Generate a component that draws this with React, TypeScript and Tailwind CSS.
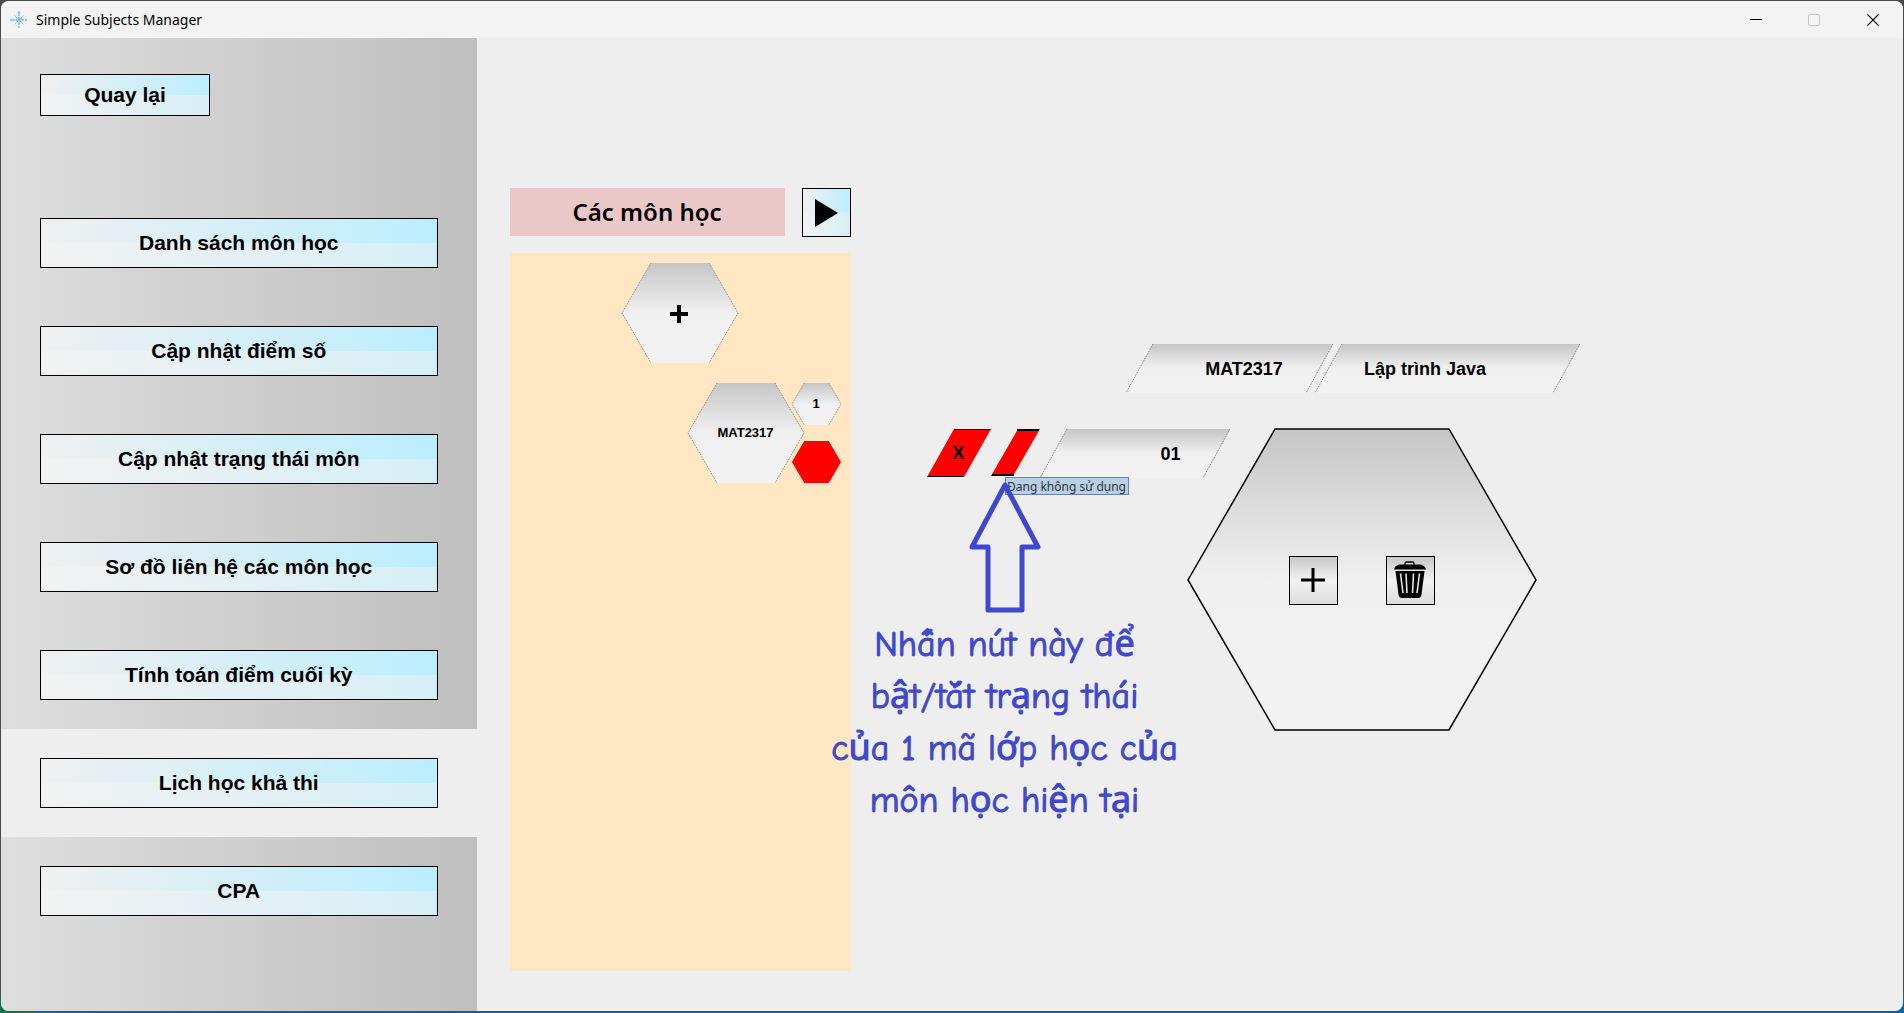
import React from "react";

const navItems = [
  "Danh sách môn học",
  "Cập nhật điểm số",
  "Cập nhật trạng thái môn",
  "Sơ đồ liên hệ các môn học",
  "Tính toán điểm cuối kỳ",
  "Lịch học khả thi",
  "CPA",
];
const activeItem = "Lịch học khả thi";

const glossy =
  "border border-black bg-[linear-gradient(to_right,#f0f0f0,#bbeeff),linear-gradient(to_right,#f2f2f2,#d6eff7)] bg-[length:100%_50%] bg-no-repeat [background-position:top,bottom]";

const silverButton =
  "flex size-[49px] items-center justify-center border border-black bg-linear-to-b from-[#c8c8c8] via-[#f2f2f2] to-[#dcdcdc]";

type ShapeProps = {
  width: number;
  height: number;
  points: string;
  fill?: string;
  stroke?: string;
  strokeWidth?: number;
};

function Shape({ width, height, points, fill, stroke = "#aaaaaa", strokeWidth = 0 }: ShapeProps) {
  const id = React.useId();
  return (
    <svg width={width} height={height} className="col-start-1 row-start-1 overflow-visible" aria-hidden="true">
      <defs>
        <linearGradient id={id} x1="0" y1="0" x2="0" y2="1">
          <stop offset="0" stopColor="#c6c6c6" />
          <stop offset="0.5" stopColor="#f0f0f0" />
          <stop offset="1" stopColor="#f2f2f2" />
        </linearGradient>
      </defs>
      <polygon points={points} fill={fill ?? `url(#${id})`} stroke={stroke} strokeWidth={strokeWidth} />
    </svg>
  );
}

function Hexagon({ width, height, fill }: { width: number; height: number; fill?: string }) {
  const inset = width / 4;
  const points = `${inset},0 ${width - inset},0 ${width},${height / 2} ${width - inset},${height} ${inset},${height} 0,${height / 2}`;
  return (
    <>
      <Shape width={width} height={height} points={points} fill={fill} />
      {!fill && (
        <svg width={width} height={height} className="col-start-1 row-start-1 overflow-visible" aria-hidden="true">
          <path
            d={`M${inset},0L0,${height / 2}L${inset},${height}M${width - inset},0L${width},${height / 2}L${width - inset},${height}`}
            fill="none"
            stroke="#666666"
            strokeOpacity="0.8"
            strokeDasharray="1 1"
          />
        </svg>
      )}
    </>
  );
}

function Slant({ width, height }: { width: number; height: number }) {
  return (
    <>
      <Shape width={width} height={height} points={`27,0 ${width},0 ${width - 27},${height} 0,${height}`} />
      <svg width={width} height={height} className="col-start-1 row-start-1" aria-hidden="true">
        <path
          d={`M27,0L0,${height}M${width},0L${width - 27},${height}`}
          fill="none"
          stroke="#666666"
          strokeOpacity="0.9"
          strokeDasharray="1 1"
        />
      </svg>
    </>
  );
}

function TrashIcon() {
  return (
    <svg width="34" height="38" viewBox="0 0 34 38" aria-hidden="true">
      <path d="M12 4V2.500Q12 1 13.500 1H19.500Q21 1 21 2.500V4" fill="none" stroke="#000" strokeWidth="1.300" />
      <path d="M1 8.500Q1.500 5 6 3.500H28Q32.500 5 33 8.500Z" />
      <path d="M2.500 10H31.500L28.500 33.500Q28 37 25 37H9Q6 37 5.500 33.500Z" />
      <path d="M7.500 12.500L10 32M13 12.500L14 32M20.500 12.500L19.500 32M26.500 12.500L24 32" stroke="#e2e2e2" strokeWidth="1.600" fill="none" />
    </svg>
  );
}

function AppIcon() {
  return (
    <svg width="18" height="18" viewBox="0 0 18 18" fill="none" stroke="#4aa8d8" aria-hidden="true">
      <path d="M9 0V18M0 9H18" strokeDasharray="2 1" />
      <path d="M4.500 4.500L13.500 13.500M13.500 4.500L4.500 13.500" strokeDasharray="1.500 1" />
      <path d="M9 5.500L12.500 9L9 12.500L5.500 9Z" strokeOpacity="0.7" />
      <path d="M7.500 1.500L9 3L10.500 1.500M1.500 7.500L3 9L1.500 10.500M16.500 7.500L15 9L16.500 10.500" strokeOpacity="0.5" />
    </svg>
  );
}

function TitleBar() {
  return (
    <header className="flex h-[37px] shrink-0 items-center justify-between bg-[#f3f3f3] pl-[9px]">
      <div className="flex items-center gap-2">
        <AppIcon />
        <h1 className="font-['Noto_Sans',sans-serif] text-sm text-black">Simple Subjects Manager</h1>
      </div>
      <div className="flex h-full">
        <button aria-label="Minimize" className="flex w-[58px] items-center justify-center">
          <svg width="12" height="12"><path d="M0 5.500H12" stroke="#000" /></svg>
        </button>
        <button aria-label="Maximize" disabled className="flex w-[58px] items-center justify-center">
          <svg width="12" height="12"><rect x="0.500" y="0.500" width="11" height="11" rx="1" fill="none" stroke="#c4c4c4" /></svg>
        </button>
        <button aria-label="Close" className="flex w-[60px] items-center justify-center">
          <svg width="12" height="12"><path d="M0 0L12 12M12 0L0 12" stroke="#000" strokeWidth="1.200" /></svg>
        </button>
      </div>
    </header>
  );
}

function Sidebar() {
  return (
    <aside className="flex w-1/4 flex-col bg-linear-to-r from-[#dedede] to-[#bfbfbf]">
      <div className="h-[151px] shrink-0 px-[39px] pt-9">
        <button className={`h-[42px] w-[170px] text-[21px] font-bold ${glossy}`}>Quay lại</button>
      </div>
      <nav>
        {navItems.map((item) => (
          <div key={item} className={`flex h-[108px] items-center px-[39px] ${item === activeItem ? "bg-[#eeeeee]" : ""}`}>
            <button className={`h-[50px] w-full text-[21px] font-bold ${glossy}`}>{item}</button>
          </div>
        ))}
      </nav>
    </aside>
  );
}

function SubjectList() {
  return (
    <section className="mb-10 ml-[33px] mt-[150px] flex w-[341px] shrink-0 flex-col gap-4">
      <div className="flex gap-[17px]">
        <h2 className="flex h-12 flex-1 items-center justify-center bg-[#ebc8c8] font-['Noto_Sans',sans-serif] text-2xl font-semibold">
          Các môn học
        </h2>
        <button aria-label="Tiếp" className={`flex size-[49px] items-center justify-center ${glossy}`}>
          <svg width="24" height="28"><path d="M1 0L24 14L1 28Z" /></svg>
        </button>
      </div>
      <div className="flex flex-1 flex-col items-center gap-5 bg-[#ffe7c3] pt-[10px]">
        <button aria-label="Thêm môn học" className="grid place-items-center">
          <Hexagon width={116} height={100} />
          <svg width="20" height="20" className="z-10 col-start-1 row-start-1"><path d="M9 2V20M0 11H18" stroke="#000" strokeWidth="4" /></svg>
        </button>
        <div className="flex self-end pr-[10px]">
          <button className="grid place-items-center text-[13px] font-bold">
            <Hexagon width={116} height={100} />
            <span className="z-10 col-start-1 row-start-1">MAT2317</span>
          </button>
          <div className="-ml-3 flex flex-col justify-between">
            <button className="grid place-items-center text-[13px] font-bold">
              <Hexagon width={49} height={42} />
              <span className="z-10 col-start-1 row-start-1">1</span>
            </button>
            <button aria-label="Xóa MAT2317" className="grid place-items-center">
              <Hexagon width={49} height={42} fill="#ff0000" />
            </button>
          </div>
        </div>
      </div>
    </section>
  );
}

function StatusHint() {
  return (
    <div className="pointer-events-none absolute left-[-102px] top-12 z-20 flex w-[360px] flex-col items-center font-normal text-[#3f48cc]">
      <div role="tooltip" className="absolute left-[180px] top-0 h-[18px] w-[124px] whitespace-nowrap border border-[#6382bf] bg-[#b8cfe5] text-center font-['Noto_Sans',sans-serif] text-xs leading-[17px] text-[#333333]">
        Đang không sử dụng
      </div>
      <svg width="72" height="132" className="relative mt-1" aria-hidden="true">
        <path d="M36 4L69 66H53V129H19V66H3Z" fill="none" stroke="#3f48cc" strokeWidth="5" strokeLinejoin="round" />
      </svg>
      <p className="mt-[6px] whitespace-nowrap text-center font-['Comic_Neue','Comic_Sans_MS','Noto_Sans',sans-serif] text-4xl leading-[52px] [-webkit-text-stroke:1px_#3f48cc]">
        Nhấn nút này để
        <br />
        bật/tắt trạng thái
        <br />
        của 1 mã lớp học của
        <br />
        môn học hiện tại
      </p>
    </div>
  );
}

function SubjectDetail() {
  return (
    <section className="ml-[76px] mt-[306px] flex shrink-0 flex-col gap-9">
      <div className="flex pl-[199px] text-lg font-bold">
        <div className="grid place-items-center">
          <Slant width={207} height={49} />
          <span className="z-10 col-start-1 row-start-1 pl-[30px]">MAT2317</span>
        </div>
        <div className="-ml-[18px] grid place-items-center">
          <Slant width={265} height={49} />
          <span className="z-10 col-start-1 row-start-1 pr-11">Lập trình Java</span>
        </div>
      </div>
      <div className="relative flex items-start text-lg font-bold">
        <button className="grid place-items-center">
          <Shape width={64} height={48} points="27,0 64,0 37,48 0,48" fill="#ff0000" />
          <svg width="64" height="48" className="col-start-1 row-start-1" aria-hidden="true">
            <path d="M27 0.500H64M0 47.500H37" stroke="#000" />
          </svg>
          <span className="z-10 col-start-1 row-start-1">X</span>
        </button>
        <button aria-label="Đang không sử dụng" className="grid place-items-center">
          <Shape width={49} height={47} points="27,0 49,0 22,47 0,47" fill="#ff0000" />
          <svg width="49" height="47" className="col-start-1 row-start-1" aria-hidden="true">
            <path d="M26 1H48M1 46H23" stroke="#000" strokeWidth="2" />
          </svg>
        </button>
        <div className="grid place-items-center">
          <Slant width={190} height={49} />
          <span className="z-10 col-start-1 row-start-1 pl-[72px]">01</span>
        </div>
        <div className="-ml-[43px] grid place-items-center">
          <Shape
            width={350}
            height={302}
            points="88,0 262,0 349,151 262,301 88,301 1,151"
            stroke="#000000"
            strokeWidth={1.5}
          />
          <div className="z-10 col-start-1 row-start-1 flex gap-12">
            <button aria-label="Thêm lớp học" className={silverButton}>
              <svg width="24" height="24"><path d="M12 0V24M0 12H24" stroke="#000" strokeWidth="3" /></svg>
            </button>
            <button aria-label="Xóa môn học" className={silverButton}>
              <TrashIcon />
            </button>
          </div>
        </div>
        <StatusHint />
      </div>
    </section>
  );
}

export default function App() {
  return (
    <div className="flex h-screen flex-col overflow-hidden bg-[linear-gradient(to_right,#16704f_35px,#0f62a0_35px)] font-['Liberation_Sans',Arial,sans-serif] text-black">
      <div className="flex min-h-0 flex-1 flex-col bg-[linear-gradient(#4a4a4a_98%,transparent_98%)] px-px pb-[2px] pt-px">
        <div className="flex min-h-0 flex-1 flex-col overflow-hidden rounded-lg bg-[#eeeeee]">
          <TitleBar />
          <main className="flex min-h-0 flex-1">
            <Sidebar />
            <SubjectList />
            <SubjectDetail />
          </main>
        </div>
      </div>
    </div>
  );
}
